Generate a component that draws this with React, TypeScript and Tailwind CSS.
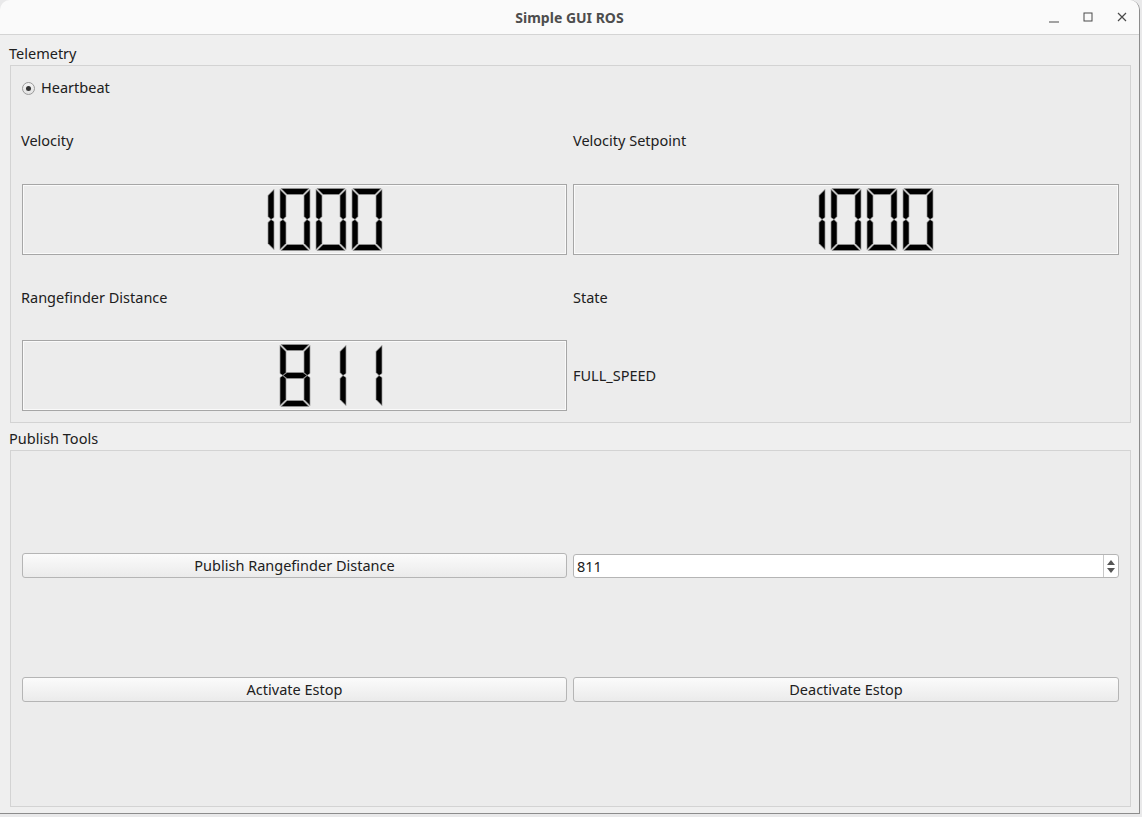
import React from "react";

const SEG: Record<string, string> = {
  a: "1,0 29,0 23,6 7,6",
  b: "30,1 30,29 27,31 24,28 24,7",
  c: "30,33 30,61 24,55 24,34 27,31",
  d: "1,62 29,62 23,56 7,56",
  e: "0,61 0,33 3,31 6,34 6,55",
  f: "0,1 0,29 3,31 6,28 6,7",
  g: "3,31 7,28 23,28 27,31 23,34 7,34",
};

const DIGITS: Record<string, string> = {
  "0": "abcdef",
  "1": "bc",
  "2": "abged",
  "3": "abgcd",
  "4": "fgbc",
  "5": "afgcd",
  "6": "afgedc",
  "7": "abc",
  "8": "abcdefg",
  "9": "abcdfg",
};

// LCD readout, 5 digit slots, right aligned like QLCDNumber
function Lcd({ value }: { value: string }) {
  const slots = value.padStart(5, " ").split("");
  return (
    <div className="h-[71px] border border-[#a6a6a6] shadow-[inset_1px_1px_0_#fafafa,inset_-1px_-1px_0_#fafafa] flex items-center justify-center">
      <svg width="186" height="63" viewBox="0 0 186 63">
        {slots.map((ch, i) => (
          <g key={i} transform={`translate(${6 + i * 36},0.5)`}>
            {(DIGITS[ch] || "").split("").map((s) => (
              <polygon key={s} points={SEG[s]} fill="#000" stroke="#9a9a9a" strokeWidth="0.7" />
            ))}
          </g>
        ))}
      </svg>
    </div>
  );
}

function QButton({ label }: { label: string }) {
  return (
    <button className="h-[25px] w-full rounded-[3px] border border-[#b5b5b5] bg-gradient-to-b from-[#fbfbfb] to-[#ebebeb] text-[14.5px] text-[#202020] leading-none">
      {label}
    </button>
  );
}

export default function App() {
  return (
    <div
      className="w-[1142px] h-[817px] bg-[#e9e9ea] overflow-hidden"
      style={{ fontFamily: '"Noto Sans", "DejaVu Sans", sans-serif' }}
    >
      <div className="w-[1140px] h-[814px] bg-[#efefef] border-r border-b border-[#8c8c8c] rounded-t-[10px] overflow-hidden flex flex-col">
        {/* title bar */}
        <div className="h-[35px] shrink-0 bg-[#fafafa] border-b border-[#d4d4d4] flex items-center relative">
          <div className="flex-1 text-center text-[14px] font-bold text-[#4d4d4d]">Simple GUI ROS</div>
          <div className="absolute right-[10px] top-0 h-[34px] flex items-center gap-[20px] text-[#3c3c3c]">
            <svg width="14" height="14" viewBox="0 0 14 14">
              <line x1="2" y1="12" x2="12" y2="12" stroke="#4a4a4a" strokeWidth="1" />
            </svg>
            <svg width="14" height="14" viewBox="0 0 14 14">
              <rect x="3" y="3" width="8" height="8" fill="none" stroke="#4a4a4a" strokeWidth="1" />
            </svg>
            <svg width="14" height="14" viewBox="0 0 14 14">
              <path d="M3 3 L11 11 M11 3 L3 11" stroke="#4a4a4a" strokeWidth="1.2" />
            </svg>
          </div>
        </div>

        <div className="flex-1 px-[10px] pt-[8px] text-[14.5px] text-[#202020]">
          <div className="h-[20px] leading-[20px] -ml-[1px]">Telemetry</div>
          <div className="mt-[2px] w-[1121px] h-[358px] border border-[#d3d3d3] bg-[#ececec] px-[11px] pt-[11px]">
            <div className="mt-[1px] h-[20px] flex items-center gap-[6px]">
              <span className="w-[13px] h-[13px] rounded-full border border-[#9a9a9a] bg-gradient-to-b from-[#f4f4f4] to-[#e2e2e2] flex items-center justify-center">
                <span className="w-[5px] h-[5px] rounded-full bg-[#333]" />
              </span>
              <span>Heartbeat</span>
            </div>
            <div className="grid grid-cols-[545px_546px] gap-x-[6px]">
              <div className="h-[86px] -ml-[1px] flex items-center">Velocity</div>
              <div className="h-[86px] flex items-center">Velocity Setpoint</div>
              <Lcd value="1000" />
              <Lcd value="1000" />
              <div className="h-[85px] -ml-[1px] flex items-center">Rangefinder Distance</div>
              <div className="h-[85px] flex items-center">State</div>
              <Lcd value="811" />
              <div className="h-[71px] pt-[1px] flex items-center">FULL_SPEED</div>
            </div>
          </div>

          <div className="mt-[5px] h-[20px] leading-[20px] -ml-[1px]">Publish Tools</div>
          <div className="mt-[2px] w-[1121px] h-[357px] border border-[#d3d3d3] bg-[#ececec] px-[11px] pt-[102px]">
            <div className="grid grid-cols-[545px_546px] gap-x-[6px] gap-y-[99px]">
              <QButton label="Publish Rangefinder Distance" />
              <div className="h-[24px] mt-[1px] rounded-[3px] border border-[#b5b5b5] bg-white flex">
                <div className="flex-1 pl-[3px] flex items-center leading-none">811</div>
                <div className="w-[15px] border-l border-[#c8c8c8] flex flex-col items-center justify-center gap-[3px]">
                  <svg width="8" height="5" viewBox="0 0 8 5">
                    <polygon points="0,5 8,5 4,0" fill="#555" />
                  </svg>
                  <svg width="8" height="5" viewBox="0 0 8 5">
                    <polygon points="0,0 8,0 4,5" fill="#555" />
                  </svg>
                </div>
              </div>
              <QButton label="Activate Estop" />
              <QButton label="Deactivate Estop" />
            </div>
          </div>
        </div>
      </div>
    </div>
  );
}
